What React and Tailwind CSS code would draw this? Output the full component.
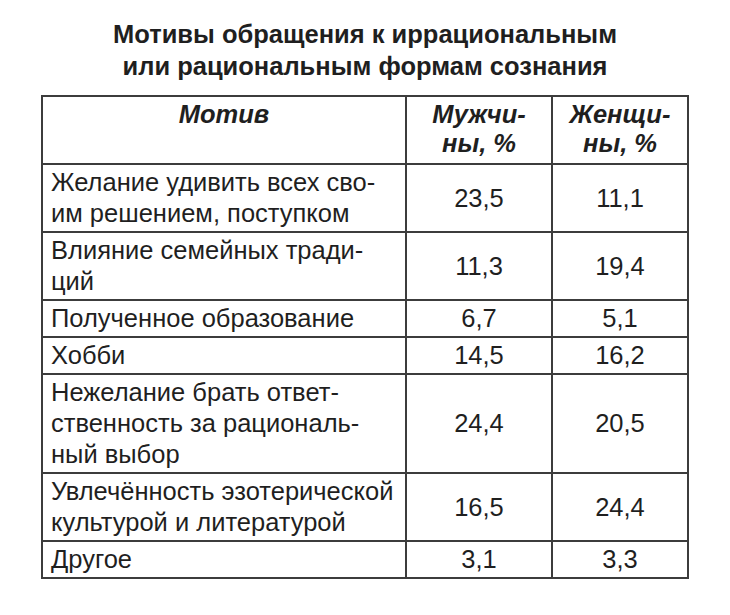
import React from "react";

const rows = [
  { motive: ["Желание удивить всех сво-", "им решением, поступком"], men: "23,5", women: "11,1" },
  { motive: ["Влияние семейных тради-", "ций"], men: "11,3", women: "19,4" },
  { motive: ["Полученное образование"], men: "6,7", women: "5,1" },
  { motive: ["Хобби"], men: "14,5", women: "16,2" },
  {
    motive: ["Нежелание брать ответ-", "ственность за рациональ-", "ный выбор"],
    men: "24,4",
    women: "20,5",
  },
  { motive: ["Увлечённость эзотерической", "культурой и литературой"], men: "16,5", women: "24,4" },
  { motive: ["Другое"], men: "3,1", women: "3,3" },
];

const App = () => {
  return (
    <div
      className="min-h-[615px] w-[730px] bg-white text-[#1f1f1f]"
      style={{ fontFamily: '"Liberation Sans", Arial, sans-serif' }}
    >
      <h1 className="pt-[18px] text-center text-[25.5px] font-bold leading-[32px]">
        Мотивы обращения к иррациональным
        <br />
        или рациональным формам сознания
      </h1>

      <table className="mx-auto mt-[13px] w-[646px] table-fixed border-collapse text-[25.5px] leading-[31px]">
        <colgroup>
          <col className="w-[364px]" />
          <col className="w-[146px]" />
          <col className="w-[136px]" />
        </colgroup>
        <thead>
          <tr className="h-[68px] align-top text-center font-bold italic leading-[29px]">
            <th className="border-2 border-[#3c3c3c] pt-[3px]">Мотив</th>
            <th className="border-2 border-[#3c3c3c] pt-[3px]">
              Мужчи-
              <br />
              ны, %
            </th>
            <th className="border-2 border-[#3c3c3c] pt-[3px]">
              Женщи-
              <br />
              ны, %
            </th>
          </tr>
        </thead>
        <tbody>
          {rows.map((row, i) => (
            <tr key={i}>
              <td className="border-2 border-[#3c3c3c] py-[2px] pl-[8px] pr-[2px] align-middle whitespace-nowrap">
                {row.motive.map((line, j) => (
                  <div key={j}>{line}</div>
                ))}
              </td>
              <td className="border-2 border-[#3c3c3c] text-center align-middle">{row.men}</td>
              <td className="border-2 border-[#3c3c3c] text-center align-middle">{row.women}</td>
            </tr>
          ))}
        </tbody>
      </table>
    </div>
  );
};

export default App;
